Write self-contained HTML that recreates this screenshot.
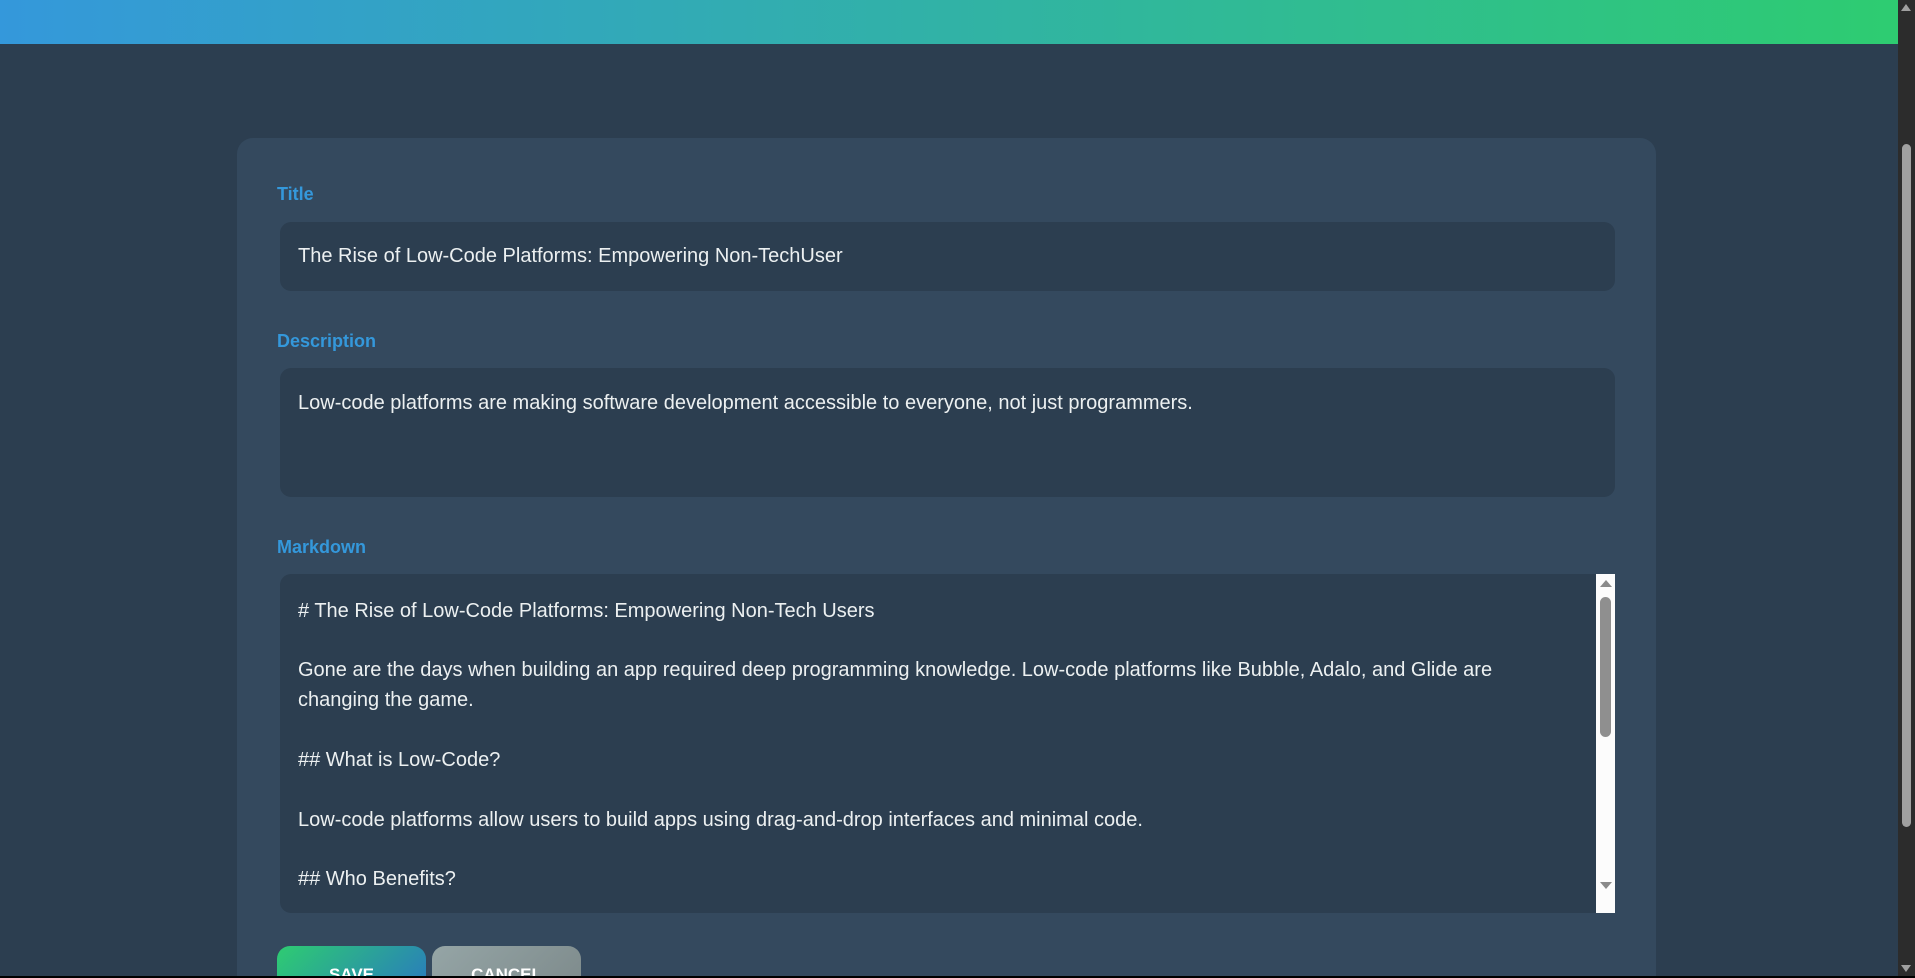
<!DOCTYPE html>
<html><head><meta charset="utf-8"><style>
*{box-sizing:border-box;margin:0;padding:0}
html,body{width:1915px;height:978px;overflow:hidden;background:#2c3e50;font-family:"Liberation Sans",sans-serif}
#wrap{position:relative;width:1915px;height:978px;overflow:hidden}
.top{position:absolute;left:0;top:0;width:1898px;height:44px;background:linear-gradient(90deg,#3498db,#2ecc71)}
.card{position:absolute;left:237px;top:138px;width:1419px;height:840px;background:#34495e;border-radius:16px 16px 0 0}
.lbl{position:absolute;left:277px;color:#3498db;font-size:18px;font-weight:bold}
.box{position:absolute;left:280px;width:1335px;background:#2c3e50;border-radius:11px;color:#ecf0f1;font-size:20px;padding-left:18px}
.md div{position:absolute;left:18px;white-space:nowrap}
.btn{position:absolute;top:946px;height:32px;width:149px;border-radius:13px 13px 0 0;color:#fff;font-weight:bold;font-size:17px;text-align:center;padding-top:19px;overflow:hidden;line-height:20px}
.sb{position:absolute;left:1898px;top:0;width:17px;height:978px;background:#2c2c2c}
</style></head><body><div id="wrap">
<div class="top"></div>
<div class="card"></div>
<div class="lbl" style="top:184px">Title</div>
<div class="box" style="top:222px;height:69px;line-height:69px">The Rise of Low-Code Platforms: Empowering Non-TechUser</div>
<div class="lbl" style="top:331px">Description</div>
<div class="box" style="top:368px;height:129px;padding-top:24px">Low-code platforms are making software development accessible to everyone, not just programmers.</div>
<div class="lbl" style="top:537px">Markdown</div>
<div class="box md" style="top:574px;height:339px;overflow:hidden;border-radius:11px 0 0 11px;width:1316px">
<div style="top:26px"># The Rise of Low-Code Platforms: Empowering Non-Tech Users</div>
<div style="top:85px">Gone are the days when building an app required deep programming knowledge. Low-code platforms like Bubble, Adalo, and Glide are</div>
<div style="top:115px">changing the game.</div>
<div style="top:175px">## What is Low-Code?</div>
<div style="top:235px">Low-code platforms allow users to build apps using drag-and-drop interfaces and minimal code.</div>
<div style="top:294px">## Who Benefits?</div>
</div>
<div style="position:absolute;left:1596px;top:574px;width:19px;height:339px;background:#fcfcfc">
<div style="position:absolute;left:4px;top:6px;border:6px solid transparent;border-bottom:7px solid #8a8a8a;border-top:0"></div>
<div style="position:absolute;left:4px;top:23px;width:11px;height:140px;border-radius:6px;background:#8f8f8f"></div>
<div style="position:absolute;left:4px;top:320px;border:6px solid transparent;border-top:7px solid #8a8a8a;border-bottom:0;margin-top:-12px"></div>
</div>
<div class="btn" style="left:277px;background:linear-gradient(135deg,#2ecc71,#2980b9)">SAVE</div>
<div class="btn" style="left:432px;background:linear-gradient(135deg,#95a5a6,#7f8c8d)">CANCEL</div>
<div class="sb">
<div style="position:absolute;left:3px;top:4px;border:5px solid transparent;border-bottom:7px solid #a0a0a0;border-top:0"></div>
<div style="position:absolute;left:4px;top:144px;width:9px;height:683px;border-radius:5px;background:#a0a0a0"></div>
<div style="position:absolute;left:3px;top:965px;border:5px solid transparent;border-top:7px solid #a0a0a0;border-bottom:0"></div>
</div>
<div style="position:absolute;left:0;top:976px;width:1915px;height:2px;background:#000"></div>
</div></body></html>
